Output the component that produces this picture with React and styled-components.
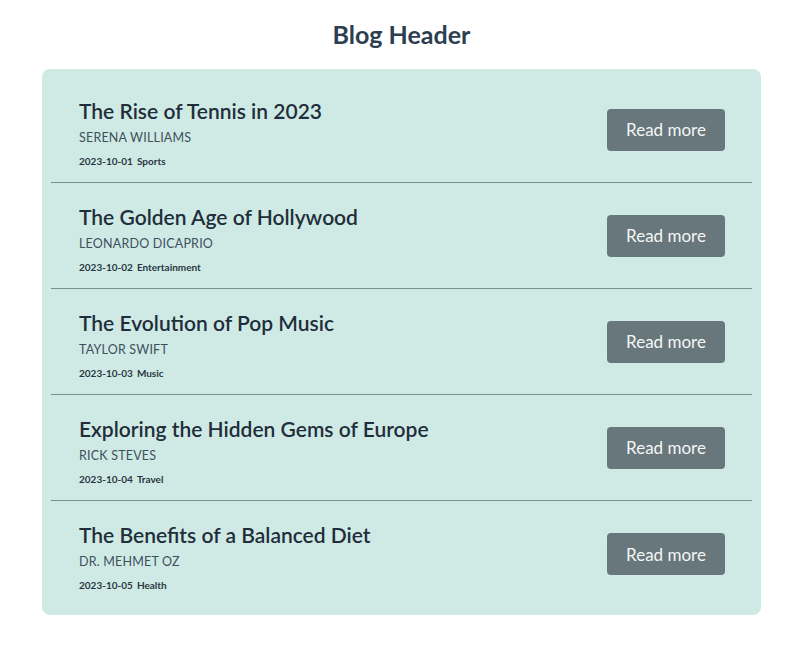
import React from 'react';
import styled, { createGlobalStyle } from 'styled-components';

const GlobalStyle = createGlobalStyle`
  body {
    margin: 0;
    background: #ffffff;
    font-family: 'Lato', 'Open Sans', sans-serif;
  }
`;

const Page = styled.div`
  padding: 16px 39px 0 42px;
  display: flex;
  flex-direction: column;
  align-items: stretch;
`;

const Heading = styled.h1`
  margin: 0 0 17px 0;
  text-align: center;
  font-size: 25px;
  font-weight: 700;
  color: #2c3e50;
  line-height: 36px;
`;

const Card = styled.div`
  background: #cfeae5;
  border-radius: 8px;
  padding: 8px 9px;
`;

const Row = styled.div`
  display: flex;
  align-items: center;
  justify-content: space-between;
  height: 106px;
  box-sizing: border-box;
  padding: 0 27px 0 28px;
  border-bottom: ${(p) => (p.last ? 'none' : '1px solid #7d8f8d')};
`;

const Info = styled.div`
  display: flex;
  flex-direction: column;
  padding-top: 5px;
`;

const Title = styled.h2`
  margin: 0;
  font-size: 21px;
  font-weight: 600;
  color: #1f2e3a;
  line-height: 26px;
`;

const Author = styled.div`
  margin-top: 6px;
  font-size: 12.5px;
  color: #3e505c;
  letter-spacing: 0.2px;
  text-transform: uppercase;
`;

const Meta = styled.div`
  margin-top: 10px;
  font-size: 10px;
  font-weight: 700;
  color: #2a3742;
  display: flex;
  gap: 4px;
`;

const Button = styled.button`
  width: 118px;
  height: 42px;
  border: none;
  border-radius: 4px;
  background: #67777b;
  color: #f4f6f6;
  font-family: 'Lato', 'Open Sans', sans-serif;
  font-size: 17px;
  cursor: pointer;
`;

const posts = [
  { title: 'The Rise of Tennis in 2023', author: 'Serena Williams', date: '2023-10-01', tag: 'Sports' },
  { title: 'The Golden Age of Hollywood', author: 'Leonardo DiCaprio', date: '2023-10-02', tag: 'Entertainment' },
  { title: 'The Evolution of Pop Music', author: 'Taylor Swift', date: '2023-10-03', tag: 'Music' },
  { title: 'Exploring the Hidden Gems of Europe', author: 'Rick Steves', date: '2023-10-04', tag: 'Travel' },
  { title: 'The Benefits of a Balanced Diet', author: 'Dr. Mehmet Oz', date: '2023-10-05', tag: 'Health' },
];

const App = () => (
  <>
    <GlobalStyle />
    <Page>
      <Heading>Blog Header</Heading>
      <Card>
        {posts.map((p, i) => (
          <Row key={p.title} last={i === posts.length - 1}>
            <Info>
              <Title>{p.title}</Title>
              <Author>{p.author}</Author>
              <Meta>
                <span>{p.date}</span>
                <span>{p.tag}</span>
              </Meta>
            </Info>
            <Button>Read more</Button>
          </Row>
        ))}
      </Card>
    </Page>
  </>
);

export default App;
